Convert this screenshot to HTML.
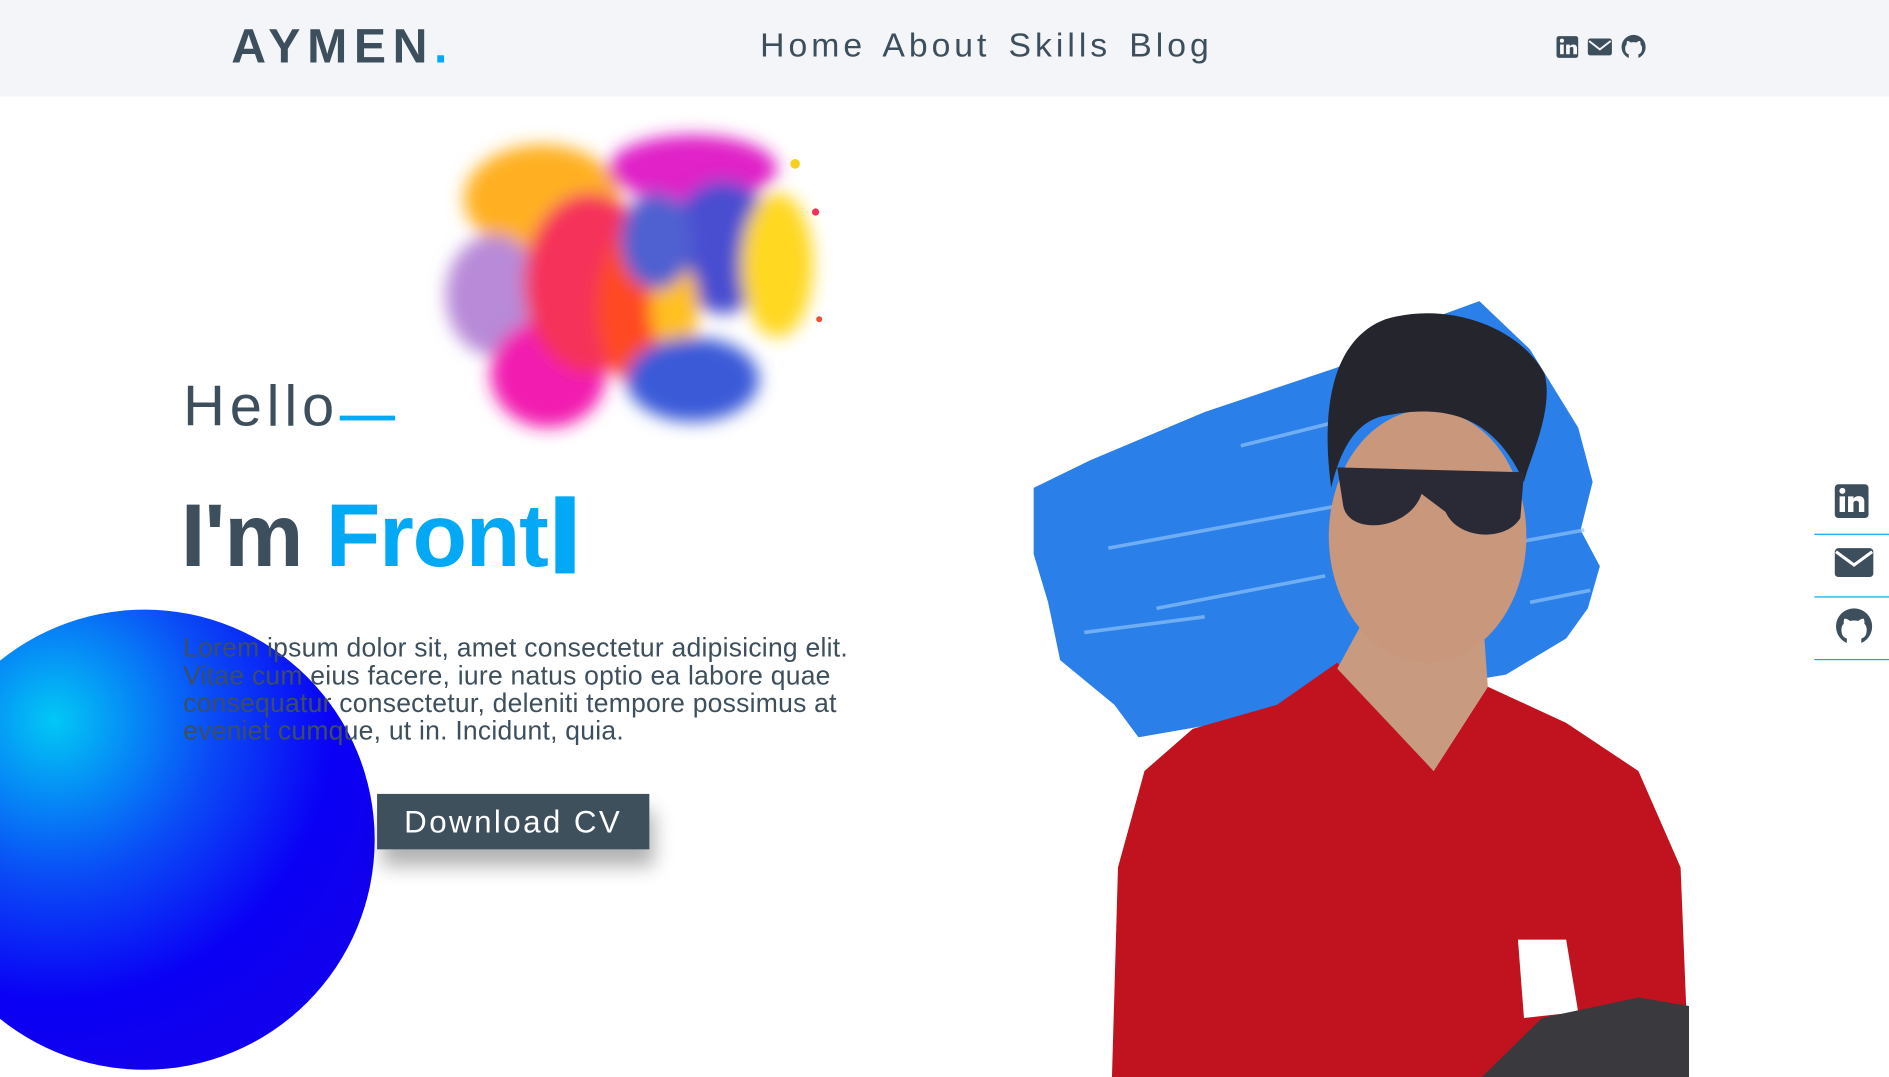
<!DOCTYPE html>
<html><head><meta charset="utf-8">
<style>
html,body{margin:0;padding:0;width:1889px;height:1077px;overflow:hidden;background:#fff;}
#w{position:absolute;left:0;top:0;width:1568px;height:894px;transform:scale(1.20472);transform-origin:0 0;font-family:"Liberation Sans",sans-serif;color:#3d4f5c;}
.nav{position:absolute;left:0;top:0;width:1568px;height:80px;background:#f3f5f8;}
.logo{position:absolute;left:192px;top:17px;font-size:40px;font-weight:bold;letter-spacing:5.5px;color:#3d4f5c;}
.logo span{color:#03a9f4;}
.links{position:absolute;left:631px;top:22px;font-size:28px;letter-spacing:3.3px;word-spacing:4px;color:#3d4f5c;}
.abs{position:absolute;}
.hello{left:152px;top:310px;font-size:48px;letter-spacing:4px;}
.uline{left:282px;top:345px;width:46px;height:4px;background:#03a9f4;}
.im{left:150px;top:402px;font-size:74px;font-weight:bold;letter-spacing:-1px;}
.im span{color:#03a9f4;}
.cur{left:461px;top:412px;width:16px;height:64px;background:#03a9f4;}
.p{left:152px;top:526px;font-size:22px;line-height:23px;color:#3d4f5c;white-space:nowrap;letter-spacing:0.2px;}
.btn{left:313px;top:659px;width:226px;height:46px;background:#3d505c;color:#fff;font-size:26px;letter-spacing:2px;text-align:center;line-height:46px;box-shadow:4px 14px 16px rgba(0,0,0,.3);}
.side{left:1506px;width:62px;height:1px;background:#03a9f4;}
</style></head><body><div id="w">
<div class="nav">
<div class="logo">AYMEN<span>.</span></div>
<div class="links">Home About Skills Blog</div>
<svg class="abs" style="left:1292px;top:28px" width="78" height="22" viewBox="0 0 78 22">
<rect x="0" y="2" width="18" height="18" rx="2" fill="#3d4f5c"/><rect x="3" y="9" width="3" height="8" fill="#fff"/><circle cx="4.5" cy="5.8" r="1.7" fill="#fff"/><path d="M8 9h3v1.5c1-2 6-2.5 6 1.5V17h-3v-5c0-1.5-3-1.5-3 0v5H8z" fill="#fff"/>
<rect x="26" y="4" width="20" height="14" rx="2" fill="#3d4f5c"/><path d="M27 6l9 7 9-7" stroke="#f3f5f8" stroke-width="1.6" fill="none"/>
<circle cx="64" cy="11" r="10" fill="#3d4f5c"/><path d="M60 21v-4c-2-.5-3-2-3-5 0-1.5.5-2.5 1.3-3.2-.2-1 0-2.2.4-2.8 1.4 0 2.4.8 3 1.3a9 9 0 0 1 4.6 0c.6-.5 1.6-1.3 3-1.3.4.6.6 1.8.4 2.8.8.7 1.3 1.7 1.3 3.2 0 3-1 4.5-3 5v4z" fill="#f3f5f8"/>
</svg>
</div>

<svg class="abs" style="left:0;top:0" width="1568" height="894" viewBox="0 0 1568 894">
<defs>
<filter id="b1" x="-20%" y="-20%" width="140%" height="140%"><feGaussianBlur stdDeviation="7"/></filter>
<radialGradient id="sph" cx="45" cy="598" r="290" gradientUnits="userSpaceOnUse"><stop offset="0" stop-color="#02c8f5"/><stop offset="0.45" stop-color="#0a4cf6"/><stop offset="0.8" stop-color="#0a00f5"/><stop offset="1" stop-color="#1000ee"/></radialGradient>
</defs>
<g filter="url(#b1)">
<ellipse cx="450" cy="165" rx="65" ry="45" fill="#ffb020"/>
<ellipse cx="410" cy="245" rx="40" ry="50" fill="#b88ad8"/>
<ellipse cx="455" cy="310" rx="48" ry="45" fill="#f21ab0"/>
<ellipse cx="490" cy="235" rx="55" ry="75" fill="#f5305a"/>
<ellipse cx="530" cy="255" rx="35" ry="65" fill="#ff4a20"/>
<ellipse cx="575" cy="140" rx="70" ry="28" fill="#e020c8"/>
<ellipse cx="600" cy="205" rx="45" ry="55" fill="#4a4ed0"/>
<ellipse cx="645" cy="220" rx="30" ry="60" fill="#ffd820"/>
<ellipse cx="560" cy="255" rx="20" ry="40" fill="#ffc020"/>
<ellipse cx="575" cy="315" rx="55" ry="35" fill="#3a5ad8"/>
<ellipse cx="545" cy="200" rx="30" ry="40" fill="#5060d0"/>
</g>
<circle cx="677" cy="176" r="3" fill="#f0305a"/><circle cx="660" cy="136" r="4" fill="#f8d020"/><circle cx="680" cy="265" r="2.5" fill="#f05030"/>
<path d="M858 405 L905 382 L1000 342 L1110 305 L1195 262 L1228 250 L1270 290 L1310 355 L1322 400 L1312 440 L1328 470 L1318 505 L1300 530 L1250 560 L1100 585 L945 612 L925 585 L880 548 L870 500 L858 460 Z" fill="#2a7fe8"/>
<g stroke="#8ec2f8" stroke-width="3" opacity=".7"><path d="M920 455 L1110 420"/><path d="M960 505 L1100 478"/><path d="M900 525 L1000 512"/><path d="M1030 370 L1110 350"/><path d="M1260 450 L1315 440"/><path d="M1270 500 L1320 490"/></g>
<path d="M923 894 L928 720 L950 640 L990 605 L1060 585 L1110 550 L1190 640 L1235 570 L1300 600 L1360 640 L1395 720 L1402 894 Z" fill="#c0131f"/>
<path d="M1260 780 L1300 780 L1310 840 L1265 845Z" fill="#fff"/>
<path d="M1230 894 L1280 845 L1360 828 L1402 835 L1402 894Z" fill="#3a3a3e"/>
<path d="M1140 500 L1230 500 L1235 570 L1190 640 L1110 555Z" fill="#c89a80"/>
<ellipse cx="1185" cy="445" rx="82" ry="105" fill="#c9977c"/>
<path d="M1105 405 C1095 330 1110 280 1150 265 C1200 250 1260 270 1282 310 C1290 340 1270 380 1265 400 C1240 345 1200 335 1150 345 C1120 350 1110 385 1105 405Z" fill="#25252e"/>
<path d="M1110 388 L1265 392 L1262 430 C1250 450 1210 448 1200 425 L1180 410 C1170 440 1120 445 1115 420Z" fill="#2a2a36"/>
</svg>

<svg class="abs" style="left:0;top:0" width="1568" height="894" viewBox="0 0 1568 894"><circle cx="120" cy="697" r="191" fill="url(#sph)"/></svg>

<div class="abs hello">Hello</div>
<div class="abs uline"></div>
<div class="abs im">I'm <span>Front</span></div>
<div class="abs cur"></div>
<div class="abs p">Lorem ipsum dolor sit, amet consectetur adipisicing elit.<br>Vitae cum eius facere, iure natus optio ea labore quae<br>consequatur consectetur, deleniti tempore possimus at<br>eveniet cumque, ut in. Incidunt, quia.</div>
<div class="abs btn">Download CV</div>

<svg class="abs" style="left:1506px;top:395px" width="62" height="160" viewBox="0 0 62 160">
<rect x="17" y="7" width="28" height="28" rx="3" fill="#3d4f5c"/><rect x="21" y="17" width="4.5" height="13" fill="#fff"/><circle cx="23.3" cy="12.5" r="2.5" fill="#fff"/><path d="M28 17h4.5v2c1.5-3 9-3.5 9 2V30h-4.5v-7.5c0-2.5-4.5-2.5-4.5 0V30H28z" fill="#fff"/>
<rect x="17" y="60" width="32" height="24" rx="3" fill="#3d4f5c"/><path d="M18 63l15 11 15-11" stroke="#fff" stroke-width="2.5" fill="none"/>
<circle cx="33" cy="125" r="15" fill="#3d4f5c"/><path d="M27 141v-6c-3-.8-4.5-3-4.5-7.5 0-2.2.8-3.7 2-4.8-.3-1.5 0-3.3.6-4.2 2 0 3.6 1.2 4.5 2a13 13 0 0 1 6.8 0c.9-.8 2.5-2 4.5-2 .6.9.9 2.7.6 4.2 1.2 1.1 2 2.600 2 4.8 0 4.5-1.5 6.7-4.5 7.5v6z" fill="#fff"/>
</svg>
<div class="abs side" style="top:443px"></div>
<div class="abs side" style="top:495px"></div>
<div class="abs side" style="top:547px"></div>
</div></body></html>
